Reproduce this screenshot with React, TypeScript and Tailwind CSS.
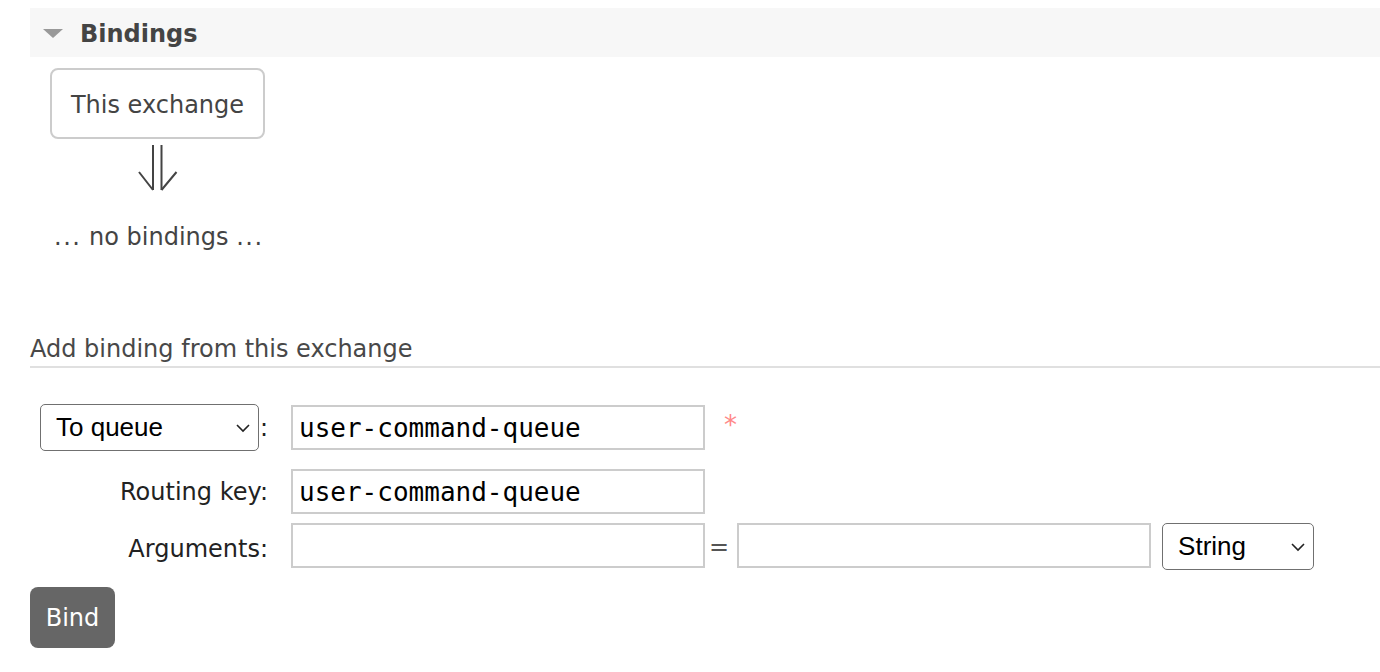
import React from "react";

const Chevron = () => (
  <svg width="16" height="10" viewBox="0 0 16 10" className="pointer-events-none absolute right-[8px] top-1/2 -translate-y-1/2">
    <path d="M2 2 L8 8 L14 2" fill="none" stroke="#222" strokeWidth="1.6" />
  </svg>
);

const Select = ({ value, width }: { value: string; width: string }) => (
  <div className={`relative ${width}`}>
    <select
      defaultValue={value}
      className="h-[47px] w-full appearance-none rounded-[5px] border border-[#707070] bg-white pl-[15px] text-[26px] text-black"
      style={{ fontFamily: '"Liberation Sans", Arial, sans-serif' }}
    >
      <option>{value}</option>
    </select>
    <Chevron />
  </div>
);

const TextInput = ({ value = "", width = "w-[414px]" }: { value?: string; width?: string }) => (
  <input
    defaultValue={value}
    className={`h-[45px] ${width} border-2 border-[#cccccc] bg-white px-[6px] text-[26px] text-black outline-none`}
    style={{ fontFamily: '"DejaVu Sans Mono", monospace' }}
  />
);

export default function App() {
  return (
    <div className="h-[672px] w-[1380px] overflow-hidden bg-white pl-[30px] pt-[8px] text-[#444]" style={{ fontFamily: '"DejaVu Sans", Verdana, sans-serif' }}>
      <div className="flex h-[49px] items-center bg-[#f7f7f7] pl-[13px]">
        <svg width="20" height="10" viewBox="0 0 20 10" className="mt-[2px]">
          <path d="M0 0 L20 0 L10 9 Z" fill="#999" />
        </svg>
        <span className="ml-[17px] mt-[2px] text-[24px] font-bold text-[#444]">Bindings</span>
      </div>

      <div className="ml-[20px] mt-[11px] flex h-[71px] w-[215px] items-center justify-center rounded-[8px] border-2 border-[#cccccc] pt-[2px] text-[24px] text-[#444]">
        This exchange
      </div>

      <svg width="40" height="47" viewBox="0 0 40 47" className="ml-[108px] mt-[6px]">
        <path d="M15 0 L15 45 M23.5 0 L23.5 45" stroke="#444" strokeWidth="2" fill="none" />
        <path d="M1 27 L15 45 M38.5 27 L23.5 45" stroke="#444" strokeWidth="2" fill="none" />
      </svg>

      <div className="ml-[24px] mt-[30px] text-[24px] leading-[30px] text-[#444]">
        <span className="tracking-[1.5px]">...</span> no bindings <span className="tracking-[1.5px]">...</span>
      </div>

      <div className="mt-[82px] border-b-2 border-[#e0e0e0] pb-[2px] text-[24px] leading-[30px] text-[#484848]">
        Add binding from this exchange
      </div>

      <div className="mt-[36px] grid grid-cols-[238px_auto] gap-x-[23px] gap-y-[18px] text-[24px] text-[#222]">
        <div className="flex items-center justify-end">
          <Select value="To queue" width="w-[219px]" />
          <span className="ml-[1px] w-[8px]">:</span>
        </div>
        <div className="flex items-center">
          <TextInput value="user-command-queue" />
          <span className="ml-[19px] mt-[-4px] text-[26px] text-[#f88]">*</span>
        </div>

        <div className="flex items-center justify-end">Routing key:</div>
        <div className="flex items-center">
          <TextInput value="user-command-queue" />
        </div>
      </div>

      <div className="mt-[9px] grid grid-cols-[238px_auto] gap-x-[23px] text-[24px] text-[#222]">
        <div className="flex items-center justify-end pt-[4px]">Arguments:</div>
        <div className="flex items-start">
          <TextInput />
          <span className="ml-[4px] mr-[8px] mt-[6px] text-[#555]">=</span>
          <TextInput />
          <div className="ml-[11px]">
            <Select value="String" width="w-[152px]" />
          </div>
        </div>
      </div>

      <button className="mt-[17px] h-[61px] w-[85px] rounded-[8px] bg-[#666] text-[24px] text-white">Bind</button>
    </div>
  );
}
